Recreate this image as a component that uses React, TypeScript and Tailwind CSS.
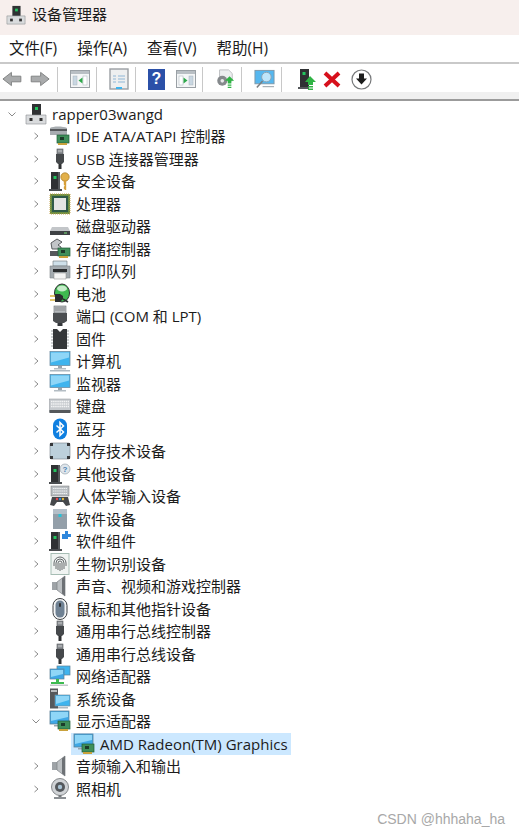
import type { ReactNode } from "react";

const font = "font-['Open_Sans','Noto_Sans_CJK_SC',sans-serif]";

function Svg({ children, size = 22 }: { children: ReactNode; size?: number }) {
  return (
    <svg width={size} height={size} viewBox="0 0 22 22" className="shrink-0">
      {children}
    </svg>
  );
}

const Tower = ({ x = 5, led = "#22c55e" }: { x?: number; led?: string }) => (
  <>
    <path d={`M${x} 2h9v17h-9z`} fill="#2f3133" />
    <path d={`M${x + 7} 2h2v17h-2z`} fill="#55585b" />
    <rect x={x + 2.5} y="6" width="3" height="3" fill={led} />
    <path d={`M${x - 2} 19h13v2h-13z`} fill="#4b4e51" />
  </>
);

const Card = ({ x = 9, y = 11 }: { x?: number; y?: number }) => (
  <>
    <rect x={x} y={y} width="12" height="8" fill="#3f8f5a" stroke="#1f5c38" strokeWidth="0.7" />
    <rect x={x + 3} y={y + 2} width="4" height="3" fill="#1c3b2a" />
    <path d={`M${x + 1} ${y + 8}h9v2h-9z`} fill="#c9a23c" />
  </>
);

const Monitor = ({ tall = false }: { tall?: boolean }) => (
  <>
    <rect x="1" y="1.5" width="20" height={tall ? 14 : 13} fill="#3fb4ee" stroke="#6f8ea3" strokeWidth="0.8" />
    <path d="M2 2.5h18v5L2 12.5z" fill="#8fd6f7" />
    <rect x="9" y={tall ? 16 : 15} width="4" height="2" fill="#9aa5ad" />
    <rect x="5" y={tall ? 18 : 17} width="12" height="1.5" fill="#b4bdc4" />
    {tall && <rect x="1" y="20" width="20" height="1.5" fill="#aeb9c1" />}
  </>
);

const Usb = () => (
  <>
    <rect x="8" y="1" width="6" height="5" fill="#8b8f93" stroke="#55585b" strokeWidth="0.6" />
    <rect x="9.5" y="2.5" width="1" height="1" fill="#fff" />
    <rect x="11.5" y="2.5" width="1" height="1" fill="#fff" />
    <path d="M7 6h8v8l-2 2H9l-2-2z" fill="#45484b" />
    <rect x="9.5" y="16" width="3" height="5" fill="#2f3133" />
  </>
);

const Speaker = () => (
  <>
    <path d="M3 7h5v8H3z" fill="#9ea3a7" />
    <path d="M8 7l8-6v20l-8-6z" fill="#bcc0c3" stroke="#7d8185" strokeWidth="0.7" />
    <path d="M13 3.5v15l3 2.5V1z" fill="#6d7175" />
  </>
);

const icons: Record<string, ReactNode> = {
  computer: (
    <>
      <path d="M7 1h9v14H7z" fill="#2f3133" />
      <rect x="10" y="4" width="3" height="3" fill="#22c55e" />
      <path d="M1 12h20v9H1z" fill="#d9dbdd" stroke="#8a8d90" strokeWidth="0.6" />
      <rect x="4.5" y="15" width="3" height="3" fill="#333" />
      <rect x="14.5" y="15" width="3" height="3" fill="#333" />
    </>
  ),
  ide: (
    <>
      <path d="M1 3c3-2 13-2 17 0v7H1z" fill="#a8adb1" />
      <path d="M1 4h17v2H1z" fill="#56595c" />
      <Card x={8} y={10} />
    </>
  ),
  usb: <Usb />,
  security: (
    <>
      <Tower x={2} />
      <circle cx="16" cy="7" r="4.2" fill="#e2b04a" stroke="#a67a22" strokeWidth="0.7" />
      <path d="M14.8 10h2.4v10h-1.2l-1.2-1.2v-2l1-1-1-1z" fill="#d69f38" />
    </>
  ),
  cpu: (
    <>
      <rect x="1" y="1" width="20" height="20" fill="#6a8d42" stroke="#c4a24a" strokeWidth="1" strokeDasharray="1 1" />
      <rect x="3" y="3" width="16" height="16" fill="#2f5a48" />
      <rect x="5" y="5" width="12" height="12" fill="#e3e4e2" />
    </>
  ),
  disk: (
    <>
      <path d="M3 12h16l2 4v4H1v-4z" fill="#c3c6c9" />
      <rect x="1" y="16" width="20" height="4" fill="#3e4144" />
      <rect x="15" y="17.5" width="3" height="1" fill="#7adf7a" />
    </>
  ),
  storage: (
    <>
      <path d="M2 5l6-4 5 3-4 3 3 2v2H3z" fill="#c2c5c8" stroke="#4b4e51" strokeWidth="0.9" />
      <path d="M1 13h9v5H1z" fill="#55585b" />
      <Card x={9} y={10} />
    </>
  ),
  printer: (
    <>
      <path d="M4 1h14v5H4z" fill="#cfe0ea" stroke="#6c7276" strokeWidth="0.6" />
      <path d="M1 6h20v12H1z" fill="#a3aaaf" stroke="#7e8488" strokeWidth="0.6" />
      <path d="M4 9h14v3H4z" fill="#2b2d2f" />
      <path d="M5 13h12v6H5z" fill="#f4f4f4" stroke="#888" strokeWidth="0.5" />
    </>
  ),
  battery: (
    <>
      <ellipse cx="13" cy="10" rx="7.5" ry="9" fill="#3fb950" stroke="#2a2c2e" strokeWidth="1" />
      <ellipse cx="13" cy="5.5" rx="5" ry="3" fill="#c5ecc9" />
      <path d="M1 13h5M1 17h5" stroke="#d8b23c" strokeWidth="1.6" />
      <path d="M6 11h5l3 2v3l-3 3H6z" fill="#2a2c2e" />
      <path d="M14 16l5 3" stroke="#2a2c2e" strokeWidth="1.6" />
    </>
  ),
  port: (
    <>
      <rect x="5" y="1" width="12" height="7" fill="#b7bbbe" stroke="#6b6f72" strokeWidth="0.6" />
      <path d="M7 2v4M9 2v4M11 2v4M13 2v4M15 2v4" stroke="#75797c" strokeWidth="0.7" />
      <path d="M4 8h14v8l-3 2H7l-3-2z" fill="#4b4e51" />
      <rect x="8.5" y="18" width="5" height="3" fill="#34373a" />
    </>
  ),
  firmware: (
    <>
      <path d="M4 1h4l3 3 3-3h4v20H4z" fill="#36383a" />
      <path d="M2 3h2M2 6h2M2 9h2M2 12h2M2 15h2M2 18h2M18 3h2M18 6h2M18 9h2M18 12h2M18 15h2M18 18h2" stroke="#a3a7aa" strokeWidth="1.2" />
    </>
  ),
  computer2: <Monitor tall />,
  monitor: <Monitor />,
  keyboard: (
    <>
      <rect x="0.5" y="4" width="21" height="13" fill="#c6cace" stroke="#8b9095" strokeWidth="0.5" />
      <path d="M2 6.5h18M2 9h18M2 11.5h18" stroke="#f3f4f5" strokeWidth="1.3" strokeDasharray="1.5 0.6" />
      <rect x="0.5" y="15" width="21" height="3" fill="#55585b" />
    </>
  ),
  bluetooth: (
    <>
      <rect x="4" y="0.5" width="14" height="21" rx="7" fill="#0f7fe0" />
      <path d="M7.5 7.5l7 6.5-3.5 3.5V4.5l3.5 3.5-7 6.5" fill="none" stroke="#fff" strokeWidth="1.5" />
    </>
  ),
  memory: (
    <>
      <rect x="1" y="3" width="20" height="16" rx="1.5" fill="#bcd0db" stroke="#77808a" strokeWidth="0.6" />
      <path d="M1 3h3v3H1zM18 3h3v3h-3zM1 16h3v3H1zM18 16h3v3h-3z" fill="#36383a" />
    </>
  ),
  other: (
    <>
      <Tower x={2} />
      <circle cx="16" cy="6" r="5" fill="#dfe6ec" stroke="#9aa5ad" strokeWidth="0.7" />
      <text x="16" y="9" textAnchor="middle" fontSize="8" fontWeight="700" fill="#4b7fb0" fontFamily="Liberation Sans">?</text>
    </>
  ),
  hid: (
    <>
      <rect x="2" y="1" width="18" height="10" fill="#b9bec2" stroke="#777" strokeWidth="0.5" />
      <path d="M4 3.5h14M4 6h14M4 8.5h14" stroke="#eef0f1" strokeWidth="1.2" strokeDasharray="1.5 0.6" />
      <path d="M1 20l2-8h16l2 8-4 1-3-4H8l-3 4z" fill="#45484b" />
      <circle cx="8" cy="14" r="1.2" fill="#e5484d" />
      <circle cx="11" cy="14" r="1.2" fill="#2f8fe0" />
      <circle cx="14" cy="14" r="1.2" fill="#e5b93c" />
    </>
  ),
  software: (
    <>
      <rect x="4" y="1" width="14" height="20" fill="#939fa9" />
      <path d="M4 1h14v5H4z" fill="#b4bfc8" />
      <rect x="9.5" y="6" width="3" height="3" fill="#25c3d8" />
    </>
  ),
  component: (
    <>
      <Tower x={2} />
      <path d="M13 4h3V1h3v3h3v3h-3v2h-6z" fill="#2f87dc" />
    </>
  ),
  biometric: (
    <>
      <rect x="2" y="0.5" width="18" height="21" fill="#f0f4f2" stroke="#a6bdb4" strokeWidth="1" />
      <path d="M7 16v-6a4 4 0 018 0v6M9 17v-7a2 2 0 014 0v7M11 10v8M5 13v-3a6 6 0 0112 0v3" fill="none" stroke="#55595c" strokeWidth="0.9" />
    </>
  ),
  speaker: <Speaker />,
  mouse: (
    <>
      <rect x="4" y="0.5" width="14" height="21" rx="7" fill="#f4f5f6" stroke="#3e4144" strokeWidth="1" />
      <rect x="6.5" y="2.5" width="9" height="17" rx="4.5" fill="#6f8193" />
      <rect x="10" y="5" width="2" height="4" rx="1" fill="#2f3133" />
    </>
  ),
  network: (
    <>
      <rect x="8" y="1" width="13" height="9" fill="#3fb4ee" stroke="#5d7f94" strokeWidth="0.7" />
      <rect x="1" y="4" width="14" height="10" fill="#3fa8e6" stroke="#5d7f94" strokeWidth="0.7" />
      <path d="M2 5h12v4L2 12z" fill="#8fd6f7" />
      <path d="M7 14h3v3h5v2H2v-2h5z" fill="#3dbb50" />
      <rect x="1" y="19.5" width="18" height="1.5" fill="#c3c8cb" />
    </>
  ),
  system: (
    <>
      <rect x="1" y="0.5" width="8" height="20" fill="#55585b" />
      <rect x="2" y="2" width="6" height="2" fill="#b9bdc0" />
      <rect x="6" y="7" width="15" height="11" fill="#3fb4ee" stroke="#7a8f9d" strokeWidth="0.7" />
      <path d="M7 8h13v4L7 16z" fill="#8fd6f7" />
      <rect x="9" y="19" width="10" height="1.5" fill="#aeb9c1" />
    </>
  ),
  display: (
    <>
      <rect x="1" y="1" width="19" height="13" fill="#3fa8e6" stroke="#5d7f94" strokeWidth="0.8" />
      <path d="M2 2h17v5L2 11z" fill="#8fd6f7" />
      <rect x="5" y="15" width="8" height="1.5" fill="#9aa5ad" />
      <Card x={9} y={11} />
    </>
  ),
  camera: (
    <>
      <circle cx="11" cy="9" r="8.5" fill="#d0d3d6" stroke="#6c7073" strokeWidth="0.8" />
      <circle cx="11" cy="9" r="5" fill="#54585c" />
      <circle cx="11" cy="9" r="2.2" fill="#a9c3d4" />
      <rect x="9.5" y="17" width="3" height="2" fill="#75797c" />
      <rect x="5" y="19" width="12" height="2" fill="#8b8f93" />
    </>
  ),
};

function TreeRow({
  level = 1,
  open = false,
  selected = false,
  icon,
  label,
}: {
  level?: number;
  open?: boolean;
  selected?: boolean;
  icon: string;
  label: string;
}) {
  if (selected) {
    return (
      <div className="flex h-[22.5px] items-center pl-[71px]">
        <div className="flex h-full w-[220px] items-center bg-[#cce8ff] pl-[2px]">
          <Svg>{icons[icon]}</Svg>
          <span className="ml-[5px] whitespace-nowrap">{label}</span>
        </div>
      </div>
    );
  }
  return (
    <div className={`flex h-[22.5px] items-center ${level === 0 ? "pl-[8px]" : "pl-[32px]"}`}>
      <span className="flex w-[8px] justify-center">
        <svg width="8" height="8" viewBox="0 0 8 8">
          <path d={open ? "M0.5 2.5L4 6l3.5-3.5" : "M2.5 1L6 4 2.5 7"} fill="none" stroke="#8a8a8a" strokeWidth="1" />
        </svg>
      </span>
      <span className="ml-[9px]">
        <Svg>{icons[icon]}</Svg>
      </span>
      <span className="ml-[5px] whitespace-nowrap">{label}</span>
    </div>
  );
}

function Sep() {
  return <div className="ml-[6px] mr-[12px] h-[25px] w-px bg-[#c8c8c8]" />;
}

function Pane({ right }: { right?: boolean }) {
  return (
    <svg width="20" height="18" viewBox="0 0 20 18">
      <rect x="0.5" y="0.5" width="19" height="17" fill="#f4f6f7" stroke="#9aa0a5" />
      <rect x="1" y="1" width="18" height="3" fill="#b9bfc4" />
      <rect x="3" y="6" width="4" height="9" fill={right ? "#ffffff" : "#c9d7e2"} stroke="#a9b4bc" strokeWidth="0.5" />
      <rect x="13" y="6" width="4" height="9" fill={right ? "#c9d7e2" : "#ffffff"} stroke="#a9b4bc" strokeWidth="0.5" />
      <path d={right ? "M7.5 7.5l4 3-4 3z" : "M12.5 7.5l-4 3 4 3z"} fill="#2ea84a" />
    </svg>
  );
}

const tree: { icon: string; label: string }[] = [
  { icon: "ide", label: "IDE ATA/ATAPI 控制器" },
  { icon: "usb", label: "USB 连接器管理器" },
  { icon: "security", label: "安全设备" },
  { icon: "cpu", label: "处理器" },
  { icon: "disk", label: "磁盘驱动器" },
  { icon: "storage", label: "存储控制器" },
  { icon: "printer", label: "打印队列" },
  { icon: "battery", label: "电池" },
  { icon: "port", label: "端口 (COM 和 LPT)" },
  { icon: "firmware", label: "固件" },
  { icon: "computer2", label: "计算机" },
  { icon: "monitor", label: "监视器" },
  { icon: "keyboard", label: "键盘" },
  { icon: "bluetooth", label: "蓝牙" },
  { icon: "memory", label: "内存技术设备" },
  { icon: "other", label: "其他设备" },
  { icon: "hid", label: "人体学输入设备" },
  { icon: "software", label: "软件设备" },
  { icon: "component", label: "软件组件" },
  { icon: "biometric", label: "生物识别设备" },
  { icon: "speaker", label: "声音、视频和游戏控制器" },
  { icon: "mouse", label: "鼠标和其他指针设备" },
  { icon: "usb", label: "通用串行总线控制器" },
  { icon: "usb", label: "通用串行总线设备" },
  { icon: "network", label: "网络适配器" },
  { icon: "system", label: "系统设备" },
];

export default function App() {
  return (
    <div className={`relative h-[835px] w-[519px] overflow-hidden bg-white text-[15px] text-[#1c1c1c] ${font}`}>
      {/* title bar */}
      <div className="flex h-[35px] items-center bg-[#f7efed] pb-[6px] pl-[6px]">
        <Svg size={20}>{icons.computer}</Svg>
        <span className="ml-[6px] text-[15px]">设备管理器</span>
      </div>

      {/* menu */}
      <div className="flex h-[27px] items-center gap-[20px] pl-[9px] text-[15.5px]">
        <span>文件(F)</span>
        <span>操作(A)</span>
        <span>查看(V)</span>
        <span>帮助(H)</span>
      </div>

      {/* toolbar */}
      <div className="flex h-[30px] items-center border-t-2 border-[#c9c9c9] pl-[2px] pt-[2px]">
        <svg width="49" height="18" viewBox="0 0 52 18">
          <path d="M1 9l9-7v4h10v6H10v4z" fill="#a9abac" stroke="#7d7f80" />
          <path d="M50 9l-9-7v4H31v6h10v4z" fill="#a9abac" stroke="#7d7f80" />
        </svg>
        <Sep />
        <Pane />
        <Sep />
        <svg width="20" height="22" viewBox="0 0 20 22">
          <rect x="1" y="1" width="18" height="20" fill="#eeeff0" stroke="#9b9fa3" strokeWidth="1.4" />
          <path d="M4 8h3M9 8h7M4 11h3M9 11h7M4 14h3M9 14h7" stroke="#8fb6d6" />
          <rect x="7" y="19" width="6" height="2" fill="#3fb4ee" />
        </svg>
        <Sep />
        <div className="flex h-[21px] w-[17px] items-center justify-center bg-[#2b50a8] font-['Liberation_Sans'] text-[16px] font-bold text-white">
          ?
        </div>
        <span className="ml-[11px] flex">
          <Pane right />
        </span>
        <Sep />
        <svg width="20" height="22" viewBox="0 0 22 22">
          <path d="M5 1h10l4 4v8H5z" fill="#eceeef" stroke="#b9bcbf" />
          <circle cx="8" cy="13" r="5.5" fill="#85898c" />
          <circle cx="8" cy="13" r="2" fill="#e8e9ea" />
          <path d="M16 8l5 5h-3v3h-4v-3h-3z" fill="#2fb344" />
          <path d="M14 17h4v1.5h-4zM14 19.5h4V21h-4z" fill="#2fb344" />
        </svg>
        <Sep />
        <svg width="21" height="22" viewBox="0 0 22 22">
          <rect x="1" y="2" width="20" height="14" fill="#55b7ef" stroke="#7d98aa" />
          <circle cx="13" cy="9" r="5" fill="#bfe5fa" stroke="#8aa3b3" />
          <path d="M9 13l-6 7" stroke="#7c7f82" strokeWidth="1.6" />
          <path d="M9 19h12" stroke="#a3acb2" strokeWidth="1.2" />
        </svg>
        <Sep />
        <span className="ml-[3px] flex">
          <svg width="20" height="22" viewBox="0 0 20 22">
            <path d="M3 1h9v18H3z" fill="#2f3133" />
            <rect x="5.5" y="4" width="3" height="3" fill="#22c55e" />
            <path d="M1 19h11v2H1z" fill="#55585b" />
            <path d="M13 8l6 6h-3v3h-5v-3H8z" fill="#2fb344" />
            <path d="M11 18h5v1.5h-5zM11 20.5h5V22h-5z" fill="#2fb344" />
          </svg>
        </span>
        <span className="ml-[6px] flex">
          <svg width="18" height="18" viewBox="0 0 18 18">
            <path d="M2 3l14 13M16 3L2 16" stroke="#d7101c" strokeWidth="4" />
          </svg>
        </span>
        <span className="ml-[10px] flex">
          <svg width="21" height="21" viewBox="0 0 21 21">
            <circle cx="10.5" cy="10.5" r="9.5" fill="#fff" stroke="#77797b" strokeWidth="1.2" />
            <path d="M8 4.5h5v5h3l-5.5 6-5.5-6h3z" fill="#1c1c1c" />
          </svg>
        </span>
      </div>

      {/* strip under toolbar */}
      <div className="h-[9px] border-b-2 border-[#9b9b9b] bg-[#f0f0f0]" />

      {/* device tree */}
      <div className="pt-[1.5px]">
        <TreeRow level={0} open icon="computer" label="rapper03wangd" />
        {tree.map((row, i) => (
          <TreeRow key={i} icon={row.icon} label={row.label} />
        ))}
        <TreeRow open icon="display" label="显示适配器" />
        <TreeRow selected icon="display" label="AMD Radeon(TM) Graphics" />
        <TreeRow icon="speaker" label="音频输入和输出" />
        <TreeRow icon="camera" label="照相机" />
      </div>

      {/* watermark */}
      <div className="absolute bottom-[5px] right-[14px] font-['Liberation_Sans'] text-[14px] text-[#a8a8a8]">
        CSDN @hhhaha_ha
      </div>
    </div>
  );
}
